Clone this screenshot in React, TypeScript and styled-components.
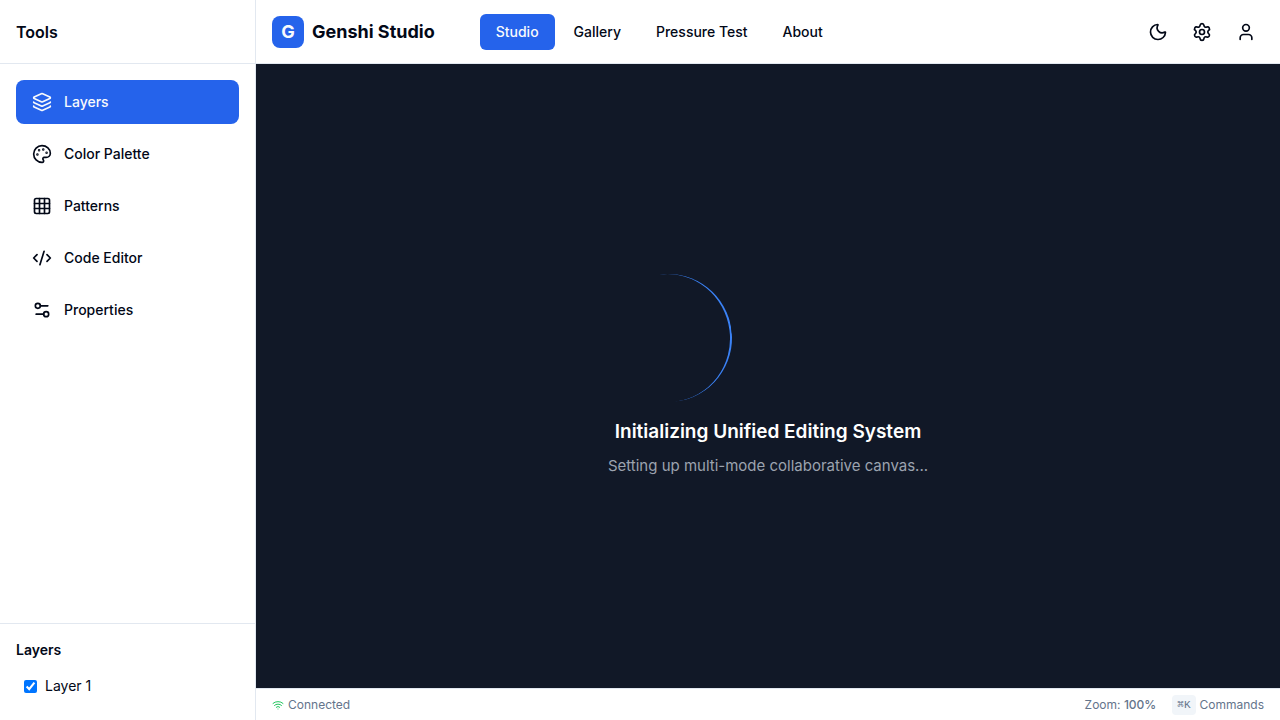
import React from "react";
import styled, { createGlobalStyle } from "styled-components";
import {
  CodeXml,
  Grid3x3,
  Layers,
  Moon,
  Palette,
  Settings,
  Settings2,
  User,
  Wifi,
} from "lucide-react";

const GlobalStyle = createGlobalStyle`
  *, *::before, *::after { box-sizing: border-box; }
  body {
    margin: 0;
    font-family: Inter, "Liberation Sans", sans-serif;
    font-size: 16px;
    line-height: 24px;
    color: #020817;
    background: #ffffff;
  }
  h1, h2, h3, p { margin: 0; }
  button { font: inherit; color: inherit; border: 0; background: none; padding: 0; cursor: pointer; }
  a { color: inherit; text-decoration: none; }
`;

const Shell = styled.div`
  display: flex;
  height: 100vh;
`;

const Sidebar = styled.aside`
  display: flex;
  flex-direction: column;
  flex: none;
  width: 256px;
  border-right: 1px solid #e2e8f0;
`;

const SidebarHeader = styled.div`
  display: flex;
  align-items: center;
  height: 64px;
  padding: 0 16px;
  border-bottom: 1px solid #e2e8f0;
`;

const SidebarTitle = styled.h2`
  font-size: 16px;
  font-weight: 600;
`;

const ToolList = styled.nav`
  display: flex;
  flex: 1;
  flex-direction: column;
  gap: 8px;
  padding: 16px;
`;

const ToolButton = styled.button<{ $active?: boolean }>`
  display: flex;
  align-items: center;
  gap: 12px;
  height: 44px;
  padding: 0 16px;
  border-radius: 8px;
  font-size: 14px;
  line-height: 20px;
  font-weight: 500;
  color: ${(p) => (p.$active ? "#f8fafc" : "#020817")};
  background: ${(p) => (p.$active ? "#2563eb" : "transparent")};
`;

const LayerPanel = styled.section`
  display: flex;
  flex-direction: column;
  gap: 8px;
  padding: 16px;
  border-top: 1px solid #e2e8f0;
`;

const LayerHeading = styled.h3`
  font-size: 14px;
  line-height: 20px;
  font-weight: 600;
`;

const LayerRow = styled.label`
  display: flex;
  align-items: center;
  gap: 8px;
  padding: 8px;
  font-size: 14px;
  line-height: 20px;
`;

const Checkbox = styled.input`
  width: 13px;
  height: 13px;
  margin: 0;
`;

const Workspace = styled.div`
  display: flex;
  flex: 1;
  flex-direction: column;
  min-width: 0;
`;

const TopBar = styled.header`
  display: flex;
  align-items: center;
  justify-content: space-between;
  height: 64px;
  padding: 0 16px;
  border-bottom: 1px solid #e2e8f0;
`;

const TopBarStart = styled.div`
  display: flex;
  align-items: center;
  gap: 45px;
`;

const Brand = styled.a`
  display: flex;
  align-items: center;
  gap: 8px;
`;

const BrandMark = styled.span`
  display: flex;
  align-items: center;
  justify-content: center;
  width: 32px;
  height: 32px;
  border-radius: 8px;
  font-size: 18px;
  line-height: 28px;
  font-weight: 700;
  color: #f8fafc;
  background: #2563eb;
`;

const BrandName = styled.h1`
  font-size: 18px;
  line-height: 28px;
  font-weight: 700;
`;

const MainNav = styled.nav`
  display: flex;
  gap: 3px;
`;

const NavLink = styled.a<{ $active?: boolean }>`
  padding: 8px 16px;
  border-radius: 6px;
  font-size: 14px;
  line-height: 20px;
  font-weight: 500;
  color: ${(p) => (p.$active ? "#f8fafc" : "#020817")};
  background: ${(p) => (p.$active ? "#2563eb" : "transparent")};
`;

const Actions = styled.div`
  display: flex;
  gap: 8px;
`;

const IconButton = styled.button`
  display: flex;
  align-items: center;
  justify-content: center;
  width: 36px;
  height: 36px;
  border-radius: 6px;
`;

const Canvas = styled.main`
  display: flex;
  flex: 1;
  align-items: center;
  justify-content: center;
  background: #111827;
`;

const Loading = styled.div`
  display: flex;
  flex-direction: column;
  align-items: center;
  min-width: 328px;
`;

const Spinner = styled.div`
  align-self: flex-start;
  width: 128px;
  height: 128px;
  margin-bottom: 16px;
  border-bottom: 2px solid #3b82f6;
  border-radius: 50%;
  transform: rotate(-97deg);
`;

const LoadingTitle = styled.h2`
  margin-bottom: 8px;
  font-size: 19px;
  line-height: 28px;
  font-weight: 600;
  color: #ffffff;
`;

const LoadingText = styled.p`
  font-size: 15px;
  color: #9ca3af;
`;

const StatusBar = styled.footer`
  display: flex;
  align-items: center;
  justify-content: space-between;
  height: 32px;
  padding: 0 16px;
  border-top: 1px solid #e2e8f0;
  font-size: 12px;
  line-height: 16px;
  color: #64748b;
`;

const StatusGroup = styled.div`
  display: flex;
  align-items: center;
  gap: 16px;
`;

const StatusItem = styled.span`
  display: flex;
  align-items: center;
  gap: 4px;
`;

const ZoomValue = styled.span`
  font-weight: 500;
`;

const Key = styled.kbd`
  padding: 2px 5px;
  border-radius: 4px;
  font-family: "Liberation Mono", monospace;
  font-size: 11px;
  line-height: 16px;
  background: #f1f5f9;
`;

const tools = [
  { label: "Layers", Icon: Layers },
  { label: "Color Palette", Icon: Palette },
  { label: "Patterns", Icon: Grid3x3 },
  { label: "Code Editor", Icon: CodeXml },
  { label: "Properties", Icon: Settings2 },
];

const pages = ["Studio", "Gallery", "Pressure Test", "About"];

const actions = [
  { label: "Toggle theme", Icon: Moon },
  { label: "Settings", Icon: Settings },
  { label: "Account", Icon: User },
];

export default function App() {
  return (
    <>
      <GlobalStyle />
      <Shell>
        <Sidebar>
          <SidebarHeader>
            <SidebarTitle>Tools</SidebarTitle>
          </SidebarHeader>
          <ToolList aria-label="Tools">
            {tools.map(({ label, Icon }, i) => (
              <ToolButton key={label} type="button" $active={i === 0}>
                <Icon size={20} />
                {label}
              </ToolButton>
            ))}
          </ToolList>
          <LayerPanel>
            <LayerHeading>Layers</LayerHeading>
            <LayerRow>
              <Checkbox type="checkbox" defaultChecked />
              Layer 1
            </LayerRow>
          </LayerPanel>
        </Sidebar>
        <Workspace>
          <TopBar>
            <TopBarStart>
              <Brand href="#">
                <BrandMark>G</BrandMark>
                <BrandName>Genshi Studio</BrandName>
              </Brand>
              <MainNav aria-label="Main">
                {pages.map((page, i) => (
                  <NavLink key={page} href="#" $active={i === 0}>
                    {page}
                  </NavLink>
                ))}
              </MainNav>
            </TopBarStart>
            <Actions>
              {actions.map(({ label, Icon }) => (
                <IconButton key={label} type="button" aria-label={label}>
                  <Icon size={20} />
                </IconButton>
              ))}
            </Actions>
          </TopBar>
          <Canvas>
            <Loading role="status">
              <Spinner />
              <LoadingTitle>Initializing Unified Editing System</LoadingTitle>
              <LoadingText>Setting up multi-mode collaborative canvas...</LoadingText>
            </Loading>
          </Canvas>
          <StatusBar>
            <StatusItem>
              <Wifi size={12} color="#22c55e" />
              Connected
            </StatusItem>
            <StatusGroup>
              <span>
                Zoom: <ZoomValue>100%</ZoomValue>
              </span>
              <StatusItem>
                <Key>⌘K</Key>
                Commands
              </StatusItem>
            </StatusGroup>
          </StatusBar>
        </Workspace>
      </Shell>
    </>
  );
}
